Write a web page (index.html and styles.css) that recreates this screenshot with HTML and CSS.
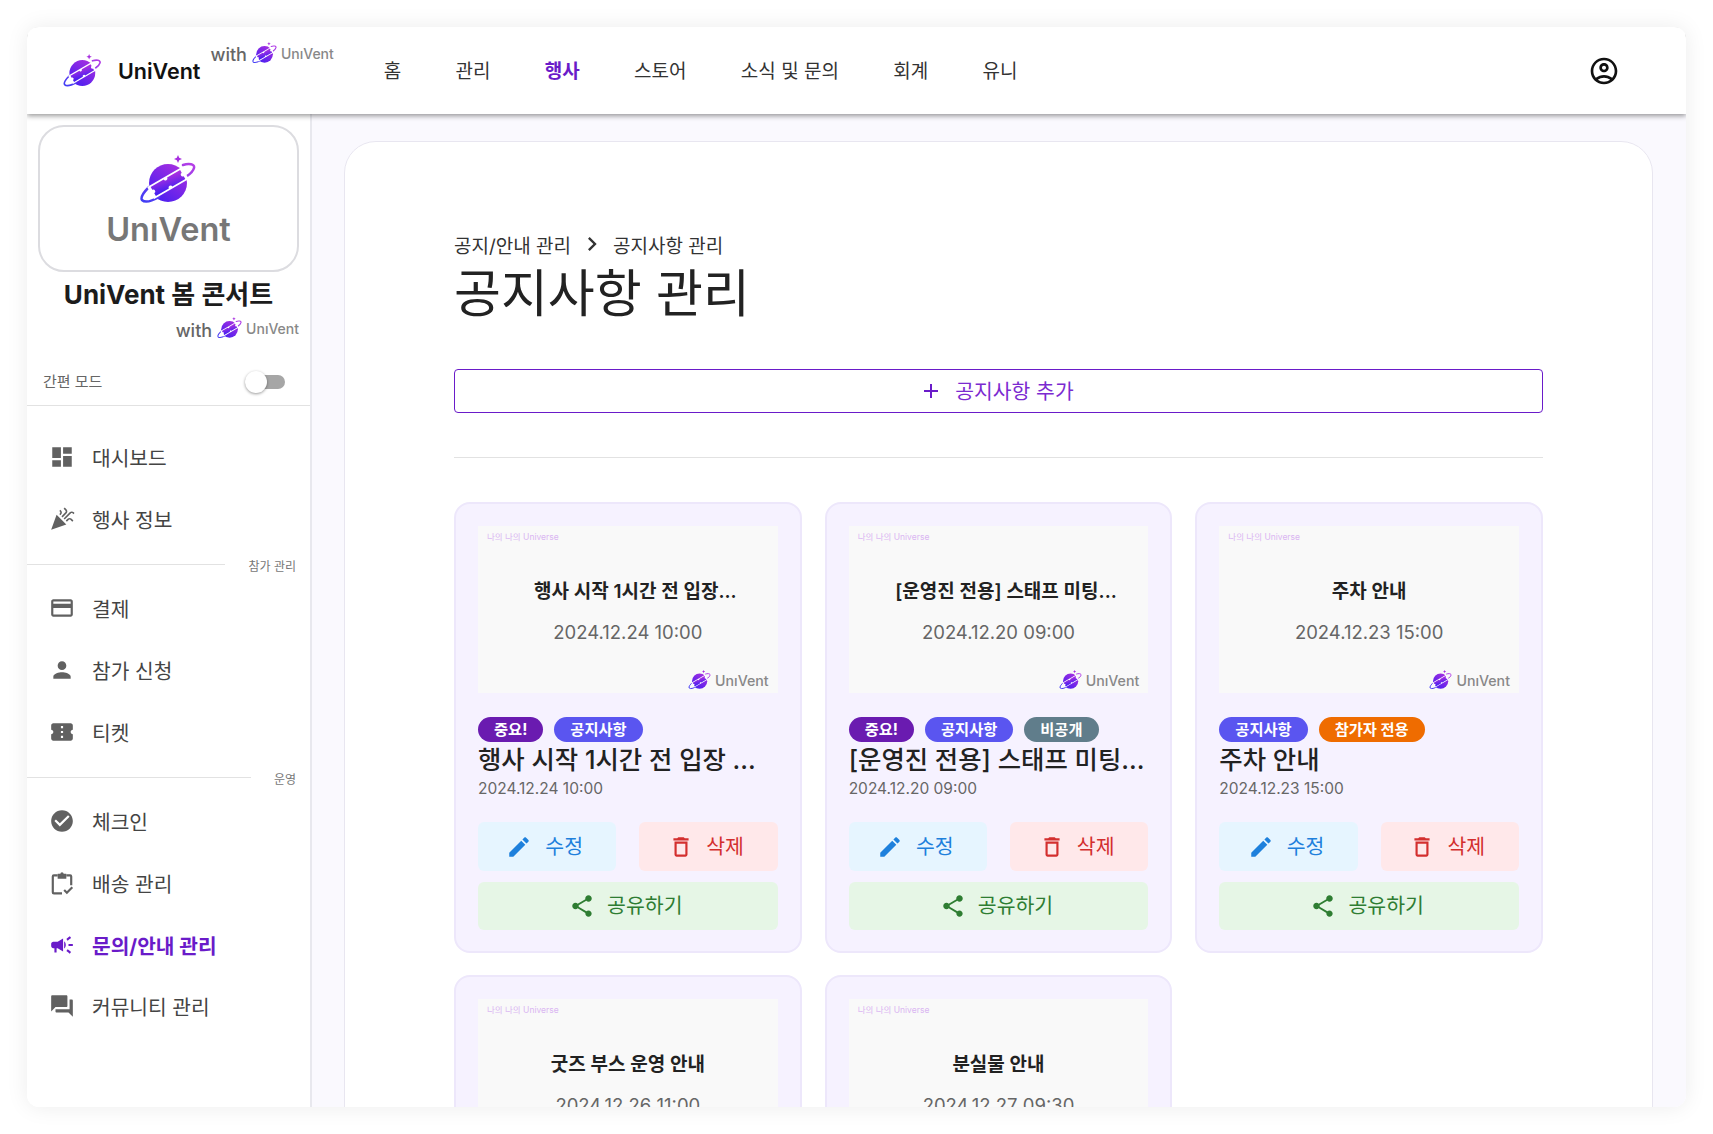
FILE: index.html
```html
<!DOCTYPE html>
<html lang="ko">

<head>
    <meta charset="UTF-8" />
    <title>UniVent</title>
    <link rel="stylesheet" href="styles.css">
</head>

<body>
    <svg class="defs">
        <defs>
            <linearGradient id="planetFill" x1="0.85" y1="0.05" x2="0.2" y2="0.95">
                <stop offset="0" stop-color="#a82fe0" />
                <stop offset="1" stop-color="#4a1ff0" />
            </linearGradient>
            <linearGradient id="ringFill" x1="1" y1="0" x2="0" y2="1">
                <stop offset="0" stop-color="#b73ee6" />
                <stop offset="1" stop-color="#3f3df5" />
            </linearGradient>
            <symbol id="planet" viewBox="0 0 58 50">
                <circle cx="28" cy="28" r="19" fill="url(#planetFill)" />
                <path d="M43 10 C49 8 55 9 54 13 C53 17 50 19 47 21 M9 32 C4 37 0 42 2 45 C5 48 12 46 19 42" fill="none" stroke="url(#ringFill)" stroke-width="2.5" stroke-linecap="round" />
                <g transform="rotate(-30 28 28)">
                    <path d="M8 21 H48 V35 H8 Z" fill="#fff" />
                    <path d="M11 22.8 H26 a2 2 0 0 0 4 0 H45 V26 a2 2 0 0 0 0 4 V33.2 H30 a2 2 0 0 0 -4 0 H11 V30 a2 2 0 0 0 0 -4 Z" fill="url(#planetFill)" />
                </g>
                <path d="M38 0 L39.2 2.8 L42 4 L39.2 5.2 L38 8 L36.8 5.2 L34 4 L36.8 2.8 Z" fill="#a82fe0" />
            </symbol>
            <symbol id="i-dashboard" viewBox="0 0 24 24"><path d="M3 13h8V3H3v10zm0 8h8v-6H3v6zm10 0h8V11h-8v10zm0-18v6h8V3h-8z" /></symbol>
            <symbol id="i-party" viewBox="0 0 24 24"><path d="M2 22l14-5-9-9zM14.53 12.53l5.59-5.59c.49-.49 1.28-.49 1.77 0l.59.59 1.06-1.06-.59-.59c-1.07-1.07-2.82-1.07-3.89 0l-5.59 5.59 1.06 1.06zM10.06 6.88l-.59.59 1.06 1.06.59-.59c1.07-1.07 1.07-2.82 0-3.89l-.59-.59-1.06 1.06.59.59c.48.48.48 1.28 0 1.77zM17.06 11.88l-1.59 1.59 1.06 1.06 1.59-1.59c.49-.49 1.28-.49 1.77 0l1.61 1.61 1.06-1.06-1.61-1.61c-1.08-1.07-2.82-1.07-3.89 0zM15.06 5.88l-3.59 3.59 1.06 1.06 3.59-3.59c1.07-1.07 1.07-2.82 0-3.89l-1.59-1.59-1.06 1.06 1.59 1.59c.48.49.48 1.29 0 1.77z" /></symbol>
            <symbol id="i-card" viewBox="0 0 24 24"><path d="M20 4H4c-1.11 0-1.99.89-1.99 2L2 18c0 1.11.89 2 2 2h16c1.11 0 2-.89 2-2V6c0-1.11-.89-2-2-2zm0 14H4v-6h16v6zm0-10H4V6h16v2z" /></symbol>
            <symbol id="i-person" viewBox="0 0 24 24"><path d="M12 12c2.21 0 4-1.79 4-4s-1.79-4-4-4-4 1.79-4 4 1.79 4 4 4zm0 2c-2.67 0-8 1.34-8 4v2h16v-2c0-2.66-5.33-4-8-4z" /></symbol>
            <symbol id="i-ticket" viewBox="0 0 24 24"><path d="M22 10V6c0-1.11-.9-2-2-2H4c-1.1 0-1.99.89-1.99 2v4c1.1 0 1.99.9 1.99 2s-.89 2-2 2v4c0 1.1.9 2 2 2h16c1.1 0 2-.9 2-2v-4c-1.1 0-2-.9-2-2s.9-2 2-2zm-9 7.5h-2v-2h2v2zm0-4.5h-2v-2h2v2zm0-4.5h-2v-2h2v2z" /></symbol>
            <symbol id="i-check" viewBox="0 0 24 24"><path d="M12 2C6.48 2 2 6.48 2 12s4.48 10 10 10 10-4.48 10-10S17.52 2 12 2zm-2 15l-5-5 1.41-1.41L10 14.17l7.59-7.59L19 8l-9 9z" /></symbol>
            <symbol id="i-clipboard" viewBox="0 0 24 24"><path d="M8 5H4.5a1 1 0 0 0-1 1v14.5a1 1 0 0 0 1 1H12M16 5h3.5a1 1 0 0 1 1 1v8M14 18.5l2.5 2.5 5-5" fill="none" stroke="currentColor" stroke-width="2" /><path d="M8 3.5h2.5a1.5 1.5 0 0 1 3 0H16V8H8z" /></symbol>
            <symbol id="i-campaign" viewBox="0 0 24 24"><path d="M18 11v2h4v-2h-4zm-2 6.61c.96.71 2.21 1.65 3.2 2.39.4-.53.8-1.07 1.2-1.6-.99-.74-2.24-1.68-3.2-2.4-.4.54-.8 1.08-1.2 1.61zM20.4 5.6c-.4-.53-.8-1.07-1.2-1.6-.99.74-2.24 1.68-3.2 2.4.4.53.8 1.07 1.2 1.6.96-.72 2.21-1.65 3.2-2.4zM4 9c-1.1 0-2 .9-2 2v2c0 1.1.9 2 2 2h1v4h2v-4h1l5 3V6L8 9H4zm11.5 3c0-1.33-.58-2.53-1.5-3.35v6.69c.92-.81 1.5-2.01 1.5-3.34z" /></symbol>
            <symbol id="i-forum" viewBox="0 0 24 24"><path d="M21 6h-2v9H6v2c0 .55.45 1 1 1h11l4 4V7c0-.55-.45-1-1-1zm-4 6V3c0-.55-.45-1-1-1H3c-.55 0-1 .45-1 1v14l4-4h10c.55 0 1-.45 1-1z" /></symbol>
            <symbol id="i-add" viewBox="0 0 24 24"><path d="M19 13h-6v6h-2v-6H5v-2h6V5h2v6h6v2z" /></symbol>
            <symbol id="i-chevron" viewBox="0 0 24 24"><path d="M10 6L8.59 7.41 13.17 12l-4.58 4.59L10 18l6-6z" /></symbol>
            <symbol id="i-edit" viewBox="0 0 24 24"><path d="M3 17.25V21h3.75L17.81 9.94l-3.75-3.75L3 17.25zM20.71 7.04c.39-.39.39-1.02 0-1.41l-2.34-2.34c-.39-.39-1.02-.39-1.41 0l-1.83 1.83 3.75 3.75 1.83-1.83z" /></symbol>
            <symbol id="i-delete" viewBox="0 0 24 24"><path d="M6 19c0 1.1.9 2 2 2h8c1.1 0 2-.9 2-2V7H6v12zM8 9h8v10H8V9zm7.5-5l-1-1h-5l-1 1H5v2h14V4h-3.5z" /></symbol>
            <symbol id="i-share" viewBox="0 0 24 24"><path d="M18 16.08c-.76 0-1.44.3-1.96.77L8.91 12.7c.05-.23.09-.46.09-.7s-.04-.47-.09-.7l7.05-4.11c.54.5 1.25.81 2.04.81 1.66 0 3-1.34 3-3s-1.34-3-3-3-3 1.34-3 3c0 .24.04.47.09.7L8.04 9.81C7.5 9.31 6.79 9 6 9c-1.66 0-3 1.34-3 3s1.34 3 3 3c.79 0 1.5-.31 2.04-.81l7.12 4.16c-.05.21-.08.43-.08.65 0 1.61 1.31 2.92 2.92 2.92 1.61 0 2.92-1.31 2.92-2.92s-1.31-2.92-2.92-2.92z" /></symbol>
            <symbol id="i-account" viewBox="0 0 24 24"><path d="M12 2C6.48 2 2 6.48 2 12s4.48 10 10 10 10-4.48 10-10S17.52 2 12 2zM7.35 18.5C8.66 17.56 10.26 17 12 17s3.34.56 4.65 1.5c-1.31.94-2.91 1.5-4.65 1.5s-3.34-.56-4.65-1.5zm10.79-1.38C16.45 15.8 14.32 15 12 15s-4.45.8-6.14 2.12C4.7 15.73 4 13.95 4 12c0-4.42 3.58-8 8-8s8 3.58 8 8c0 1.95-.7 3.73-1.86 5.12zM12 6c-1.93 0-3.5 1.57-3.5 3.5S10.07 13 12 13s3.5-1.57 3.5-3.5S13.93 6 12 6zm0 5c-.83 0-1.5-.67-1.5-1.5S11.17 8 12 8s1.5.67 1.5 1.5S12.83 11 12 11z" /></symbol>
        </defs>
    </svg>

    <div class="window">
        <header class="topbar">
            <svg class="brand-logo"><use href="#planet" /></svg>
            <span class="brand-name">UniVent</span>
            <div class="with with-top">
                <span>with</span>
                <svg class="with-logo"><use href="#planet" /></svg>
                <span class="with-name">UnıVent</span>
            </div>
            <nav class="topnav">
                <a>홈</a>
                <a>관리</a>
                <a class="active">행사</a>
                <a>스토어</a>
                <a>소식 및 문의</a>
                <a>회계</a>
                <a>유니</a>
            </nav>
            <svg class="account"><use href="#i-account" /></svg>
        </header>

        <div class="body-row">
            <aside class="sidebar">
                <div class="logo-box">
                    <svg class="logo-box-img"><use href="#planet" /></svg>
                    <div class="logo-box-name">UnıVent</div>
                </div>
                <div class="event-name">UniVent 봄 콘서트</div>
                <div class="with with-side">
                    <span>with</span>
                    <svg class="with-logo"><use href="#planet" /></svg>
                    <span class="with-name">UnıVent</span>
                </div>
                <div class="simple-mode">
                    <span>간편 모드</span>
                    <div class="toggle"><div class="knob"></div></div>
                </div>
                <div class="simple-line"></div>

                <ul class="side-nav first">
                    <li><svg><use href="#i-dashboard" /></svg>대시보드</li>
                    <li><svg><use href="#i-party" /></svg>행사 정보</li>
                </ul>
                <div class="section"><div class="section-line"></div><span>참가 관리</span></div>
                <ul class="side-nav">
                    <li><svg><use href="#i-card" /></svg>결제</li>
                    <li><svg><use href="#i-person" /></svg>참가 신청</li>
                    <li><svg><use href="#i-ticket" /></svg>티켓</li>
                </ul>
                <div class="section"><div class="section-line"></div><span>운영</span></div>
                <ul class="side-nav">
                    <li><svg><use href="#i-check" /></svg>체크인</li>
                    <li><svg><use href="#i-clipboard" /></svg>배송 관리</li>
                    <li class="active"><svg><use href="#i-campaign" /></svg>문의/안내 관리</li>
                    <li><svg><use href="#i-forum" /></svg>커뮤니티 관리</li>
                </ul>
            </aside>

            <main class="main">
                <div class="panel">
                    <div class="breadcrumb">
                        <span>공지/안내 관리</span>
                        <svg><use href="#i-chevron" /></svg>
                        <span>공지사항 관리</span>
                    </div>
                    <h1>공지사항 관리</h1>
                    <button class="add-btn"><svg><use href="#i-add" /></svg>공지사항 추가</button>
                    <div class="rule"></div>

                    <div class="cards">
                        <article class="card">
                            <div class="preview">
                                <div class="preview-tag">나의 나의 Universe</div>
                                <div class="preview-title long">행사 시작 1시간 전 입장...</div>
                                <div class="preview-date">2024.12.24 10:00</div>
                                <div class="preview-foot"><svg><use href="#planet" /></svg>UnıVent</div>
                            </div>
                            <div class="chips">
                                <span class="chip important">중요!</span>
                                <span class="chip notice">공지사항</span>
                            </div>
                            <div class="card-title">행사 시작 1시간 전 입장 ...</div>
                            <div class="card-date">2024.12.24 10:00</div>
                            <div class="actions">
                                <button class="btn edit"><svg><use href="#i-edit" /></svg>수정</button>
                                <button class="btn del"><svg><use href="#i-delete" /></svg>삭제</button>
                            </div>
                            <button class="btn share"><svg><use href="#i-share" /></svg>공유하기</button>
                        </article>

                        <article class="card">
                            <div class="preview">
                                <div class="preview-tag">나의 나의 Universe</div>
                                <div class="preview-title long">[운영진 전용] 스태프 미팅...</div>
                                <div class="preview-date">2024.12.20 09:00</div>
                                <div class="preview-foot"><svg><use href="#planet" /></svg>UnıVent</div>
                            </div>
                            <div class="chips">
                                <span class="chip important">중요!</span>
                                <span class="chip notice">공지사항</span>
                                <span class="chip private">비공개</span>
                            </div>
                            <div class="card-title">[운영진 전용] 스태프 미팅...</div>
                            <div class="card-date">2024.12.20 09:00</div>
                            <div class="actions">
                                <button class="btn edit"><svg><use href="#i-edit" /></svg>수정</button>
                                <button class="btn del"><svg><use href="#i-delete" /></svg>삭제</button>
                            </div>
                            <button class="btn share"><svg><use href="#i-share" /></svg>공유하기</button>
                        </article>

                        <article class="card">
                            <div class="preview">
                                <div class="preview-tag">나의 나의 Universe</div>
                                <div class="preview-title">주차 안내</div>
                                <div class="preview-date">2024.12.23 15:00</div>
                                <div class="preview-foot"><svg><use href="#planet" /></svg>UnıVent</div>
                            </div>
                            <div class="chips">
                                <span class="chip notice">공지사항</span>
                                <span class="chip attendee">참가자 전용</span>
                            </div>
                            <div class="card-title">주차 안내</div>
                            <div class="card-date">2024.12.23 15:00</div>
                            <div class="actions">
                                <button class="btn edit"><svg><use href="#i-edit" /></svg>수정</button>
                                <button class="btn del"><svg><use href="#i-delete" /></svg>삭제</button>
                            </div>
                            <button class="btn share"><svg><use href="#i-share" /></svg>공유하기</button>
                        </article>

                        <article class="card">
                            <div class="preview">
                                <div class="preview-tag">나의 나의 Universe</div>
                                <div class="preview-title">굿즈 부스 운영 안내</div>
                                <div class="preview-date">2024.12.26 11:00</div>
                                <div class="preview-foot"><svg><use href="#planet" /></svg>UnıVent</div>
                            </div>
                        </article>

                        <article class="card">
                            <div class="preview">
                                <div class="preview-tag">나의 나의 Universe</div>
                                <div class="preview-title">분실물 안내</div>
                                <div class="preview-date">2024.12.27 09:30</div>
                                <div class="preview-foot"><svg><use href="#planet" /></svg>UnıVent</div>
                            </div>
                        </article>
                    </div>
                </div>
            </main>
        </div>
    </div>
</body>

</html>
```

FILE: styles.css
```css
* {
    box-sizing: border-box;
    margin: 0;
    padding: 0;
}

body {
    background: #fff;
    padding: 27px;
    font-family: Inter, "Noto Sans CJK KR", sans-serif;
    color: #222;
}

.defs {
    display: block;
    width: 0;
    height: 0;
}

.window {
    height: 1080px;
    display: flex;
    flex-direction: column;
    overflow: hidden;
    background: #fff;
    border-radius: 12px;
    box-shadow: 0 0 22px rgba(0, 0, 0, 0.08);
}

/* top bar */
.topbar {
    position: relative;
    z-index: 2;
    flex: 0 0 87px;
    display: flex;
    align-items: center;
    padding: 0 66px 0 36px;
    background: #fff;
    box-shadow: 0 2px 5px rgba(0, 0, 0, 0.4);
}

.brand-logo {
    width: 40px;
    height: 34px;
}

.brand-name {
    margin-left: 15px;
    font-size: 21.5px;
    font-weight: 600;
    color: #111;
}

.with {
    display: flex;
    align-items: center;
    font-weight: 500;
    font-size: 18px;
    color: #666;
}

.with-logo {
    width: 26px;
    height: 22px;
    margin: 0 0 4px 5px;
}

.with-name {
    margin: 0 0 3px 3px;
    font-size: 14px;
    color: #888;
}

.with-top {
    margin: 0 0 32px 10px;
}

.topnav {
    display: flex;
    gap: 54.3px;
    margin: 0 0 3px 50px;
    font-size: 19px;
    color: #333;
}

.topnav .active {
    color: #6a1bc9;
    font-weight: 700;
}

.account {
    width: 32px;
    height: 32px;
    margin-left: auto;
    fill: #111;
}

.body-row {
    flex: 1;
    display: flex;
    min-height: 0;
}

/* sidebar */
.sidebar {
    flex: 0 0 285px;
    background: #fff;
    border-right: 2px solid #e8e8ee;
}

.logo-box {
    width: 261px;
    height: 147px;
    margin: 11px 0 0 11px;
    border: 2px solid #dcdce0;
    border-radius: 26px;
    text-align: center;
}

.logo-box-img {
    display: block;
    width: 60px;
    height: 50px;
    margin: 28px auto 0;
}

.logo-box-name {
    margin-top: 3px;
    font-size: 32.5px;
    line-height: 44px;
    font-weight: 600;
    color: #777;
}

.event-name {
    margin-top: 8px;
    text-align: center;
    font-size: 26px;
    line-height: 30px;
    font-weight: 700;
    color: #1c1c1c;
}

.with-side {
    justify-content: flex-end;
    height: 20px;
    margin: 10px 11px 0 0;
}

.simple-mode {
    display: flex;
    justify-content: space-between;
    align-items: center;
    height: 24px;
    margin-top: 30px;
    padding: 0 25px 0 16px;
    font-size: 15px;
    color: #666;
}

.simple-mode span {
    margin-bottom: 3px;
}

.toggle {
    position: relative;
    width: 40px;
    height: 14px;
    border-radius: 7px;
    background: #a6a6a6;
}

.knob {
    position: absolute;
    left: 0;
    top: -4px;
    width: 22px;
    height: 22px;
    border-radius: 50%;
    background: #fff;
    box-shadow: 0 1px 3px rgba(0, 0, 0, 0.4);
}

.simple-line {
    height: 1px;
    margin-top: 11px;
    background: #e2e2e2;
}

.side-nav {
    list-style: none;
}

.side-nav.first {
    padding-top: 20px;
}

.side-nav li {
    display: flex;
    align-items: center;
    height: 61.7px;
    padding-left: 22px;
    font-size: 20.3px;
    color: #444;
}

.side-nav svg {
    width: 26px;
    height: 26px;
    margin-right: 17px;
    fill: #616161;
    color: #616161;
}

.side-nav li.active {
    color: #6a1bc9;
    font-weight: 700;
}

.side-nav li.active svg {
    fill: #6a1bc9;
}

.section {
    display: flex;
    align-items: center;
    gap: 23px;
    height: 26px;
    margin-top: 2px;
    padding-right: 14px;
    font-size: 12px;
    color: #777;
}

.section span {
    padding-top: 2px;
}

.section-line {
    flex: 1;
    height: 1px;
    background: #e2e2e2;
}

/* main */
.main {
    flex: 1;
    min-width: 0;
    padding: 27px 33px 0 32px;
    background: #faf9fe;
}

.panel {
    min-height: 1000px;
    padding: 90px 109px 0;
    background: #fff;
    border: 1px solid #e8e6f0;
    border-radius: 32px;
}

.breadcrumb {
    display: flex;
    align-items: center;
    height: 24px;
    font-size: 19px;
    color: #333;
}

.breadcrumb svg {
    width: 28px;
    height: 28px;
    margin: 0 7px;
    fill: #333;
}

h1 {
    margin-top: 8px;
    font-size: 51px;
    line-height: 60px;
    font-weight: 400;
    color: #222;
}

.add-btn {
    display: flex;
    align-items: center;
    justify-content: center;
    gap: 12px;
    width: 100%;
    height: 44px;
    margin-top: 45px;
    padding: 0 4px 2px 0;
    background: #fff;
    border: 1.5px solid #6a1bc9;
    border-radius: 4px;
    font-family: inherit;
    font-size: 20.4px;
    color: #7b2ad0;
}

.add-btn svg {
    width: 24px;
    height: 24px;
    margin-top: 2px;
    fill: #6a1bc9;
}

.rule {
    height: 1px;
    margin: 44px 0;
    background: #e2e2e2;
}

.cards {
    display: grid;
    grid-template-columns: repeat(3, 1fr);
    gap: 22px 23px;
}

.card {
    height: 451px;
    padding: 22px;
    background: #f6f2ff;
    border: 2px solid #ede7fb;
    border-radius: 16px;
}

.preview {
    height: 167px;
    padding: 5px 9px 0;
    background: #f9f9f9;
    text-align: center;
}

.preview-tag {
    height: 12px;
    font-size: 8.5px;
    line-height: 12px;
    text-align: left;
    color: #d9b6f2;
}

.preview-title {
    margin-top: 36px;
    font-size: 19px;
    line-height: 26px;
    font-weight: 600;
    white-space: nowrap;
    color: #222;
}

.preview-title.long {
    padding-left: 15px;
}

.preview-date {
    margin-top: 14px;
    font-size: 18.5px;
    line-height: 26px;
    color: #666;
}

.preview-foot {
    display: flex;
    align-items: center;
    justify-content: flex-end;
    height: 22px;
    margin-top: 24px;
    font-size: 14.2px;
    font-weight: 500;
    color: #888;
}

.preview-foot svg {
    width: 24px;
    height: 20px;
    margin-right: 3px;
}

.chips {
    display: flex;
    gap: 11px;
    margin-top: 24px;
}

.chip {
    height: 25px;
    padding: 0 16px;
    border-radius: 13px;
    font-size: 15.3px;
    line-height: 25px;
    font-weight: 700;
    color: #fff;
}

.chip.important {
    background: #6a1bb0;
}

.chip.notice {
    background: #5a55f0;
}

.chip.private {
    background: #607d8b;
}

.chip.attendee {
    background: #ef6c00;
}

.card-title {
    margin-top: 1px;
    font-size: 25.4px;
    line-height: 34px;
    font-weight: 500;
    white-space: nowrap;
    color: #222;
}

.card-date {
    margin-top: 1px;
    font-size: 15.5px;
    line-height: 22px;
    color: #666;
}

.actions {
    display: flex;
    gap: 23px;
    margin-top: 22px;
}

.btn {
    display: flex;
    align-items: center;
    justify-content: center;
    padding: 0 5px 4px 0;
    border: none;
    border-radius: 6px;
    font-family: inherit;
    font-size: 20.5px;
}

.btn svg {
    width: 26px;
    height: 26px;
    margin-top: 4px;
}

.actions .btn {
    flex: 1;
    height: 49px;
}

.btn.edit {
    gap: 13px;
    background: #e6f5ff;
    color: #1e80dc;
}

.btn.edit svg {
    fill: #1e80dc;
}

.btn.del {
    gap: 12px;
    background: #ffe8ea;
    color: #d32f2f;
}

.btn.del svg {
    fill: #d32f2f;
}

.btn.share {
    gap: 12px;
    width: 100%;
    height: 48px;
    margin-top: 11px;
    padding-right: 4px;
    background: #e6f6e6;
    color: #2e7d32;
}

.btn.share svg {
    fill: #2e7d32;
}
```
